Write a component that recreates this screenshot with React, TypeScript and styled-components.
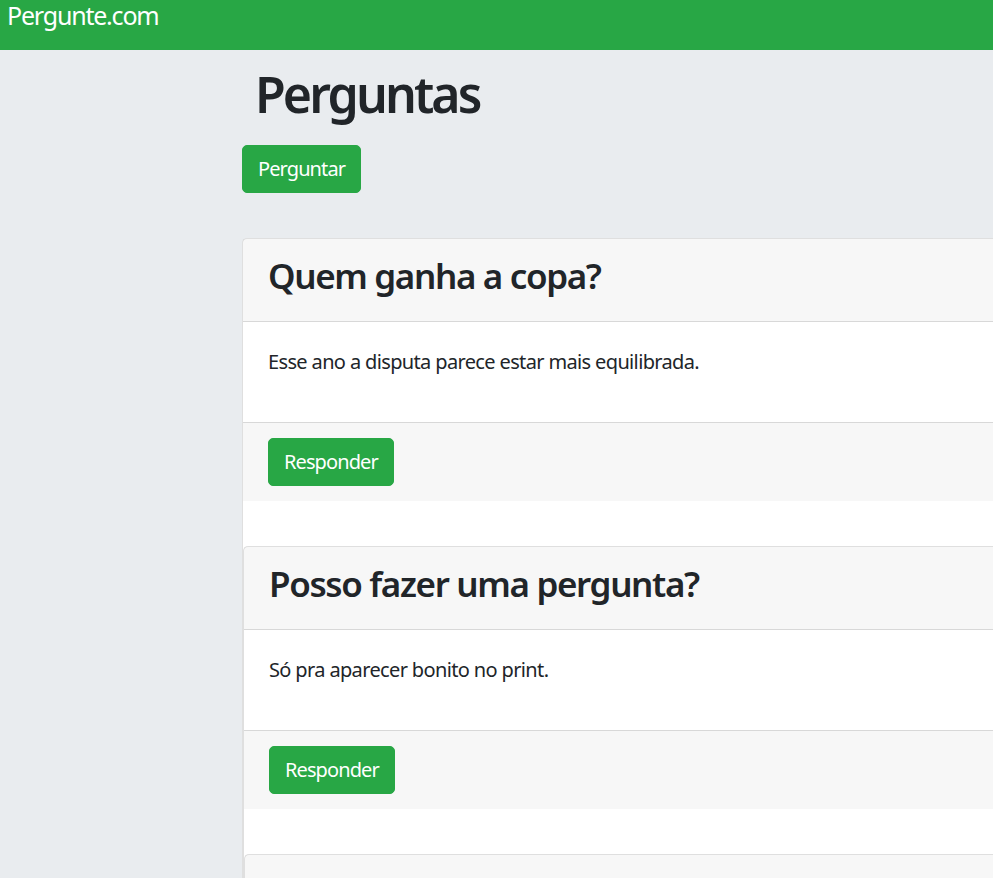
import React from "react";
import styled, { createGlobalStyle } from "styled-components";

const GlobalStyle = createGlobalStyle`
  html, body {
    margin: 0;
    padding: 0;
    background: #e9ecef;
    overflow-x: hidden;
  }
  body {
    font-family: "Noto Sans", "Open Sans", sans-serif;
    color: #212529;
  }
`;

const Navbar = styled.nav`
  height: 50px;
  background: #28a745;
  display: flex;
  align-items: flex-start;
  padding: 0 7px;
  box-sizing: border-box;
`;

const Brand = styled.a`
  color: #ffffff;
  font-size: 25px;
  line-height: 30px;
  letter-spacing: -1.2px;
  text-decoration: none;
`;

const Main = styled.main`
  padding-left: 242px;
  width: 1100px;
`;

const PageTitle = styled.h1`
  margin: 14px 0 21px 13px;
  font-size: 50px;
  font-weight: 600;
  line-height: 60px;
  letter-spacing: -2.9px;
`;

const Button = styled.button`
  background: #28a745;
  border: 1px solid #28a745;
  border-radius: 5px;
  color: #ffffff;
  font-family: inherit;
  font-size: 20px;
  line-height: 30px;
  letter-spacing: -0.9px;
  padding: 8px 15px;
  cursor: pointer;
`;

const Card = styled.div`
  background: #ffffff;
  border: 1px solid rgba(0, 0, 0, 0.125);
  border-radius: 5px;
  margin-top: 45px;
`;

const CardHeader = styled.div`
  background: rgba(0, 0, 0, 0.03);
  border-bottom: 1px solid rgba(0, 0, 0, 0.125);
  padding: 16px 25px 24px;
`;

const CardTitle = styled.h3`
  margin: 0;
  font-size: 35px;
  font-weight: 600;
  line-height: 42px;
  letter-spacing: -1.35px;
`;

const CardBody = styled.div`
  padding: 25px;
`;

const CardText = styled.p`
  margin: 0 0 20px;
  font-size: 20px;
  line-height: 30px;
  letter-spacing: -0.64px;
`;

const CardFooter = styled.div`
  background: rgba(0, 0, 0, 0.03);
  border-top: 1px solid rgba(0, 0, 0, 0.125);
  padding: 15px 25px;
`;

type Question = { title: string; text: string };

const questions: Question[] = [
  { title: "Quem ganha a copa?", text: "Esse ano a disputa parece estar mais equilibrada." },
  { title: "Posso fazer uma pergunta?", text: "Só pra aparecer bonito no print." },
  { title: "Qual a melhor linguagem?", text: "Quero aprender a programar." },
];

function QuestionCard({ items }: { items: Question[] }) {
  if (items.length === 0) return null;
  const [q, ...rest] = items;
  return (
    <Card>
      <CardHeader>
        <CardTitle>{q.title}</CardTitle>
      </CardHeader>
      <CardBody>
        <CardText>{q.text}</CardText>
      </CardBody>
      <CardFooter>
        <Button>Responder</Button>
      </CardFooter>
      <QuestionCard items={rest} />
    </Card>
  );
}

export default function App() {
  return (
    <>
      <GlobalStyle />
      <Navbar>
        <Brand href="#">Pergunte.com</Brand>
      </Navbar>
      <Main>
        <PageTitle>Perguntas</PageTitle>
        <Button>Perguntar</Button>
        <QuestionCard items={questions} />
      </Main>
    </>
  );
}
